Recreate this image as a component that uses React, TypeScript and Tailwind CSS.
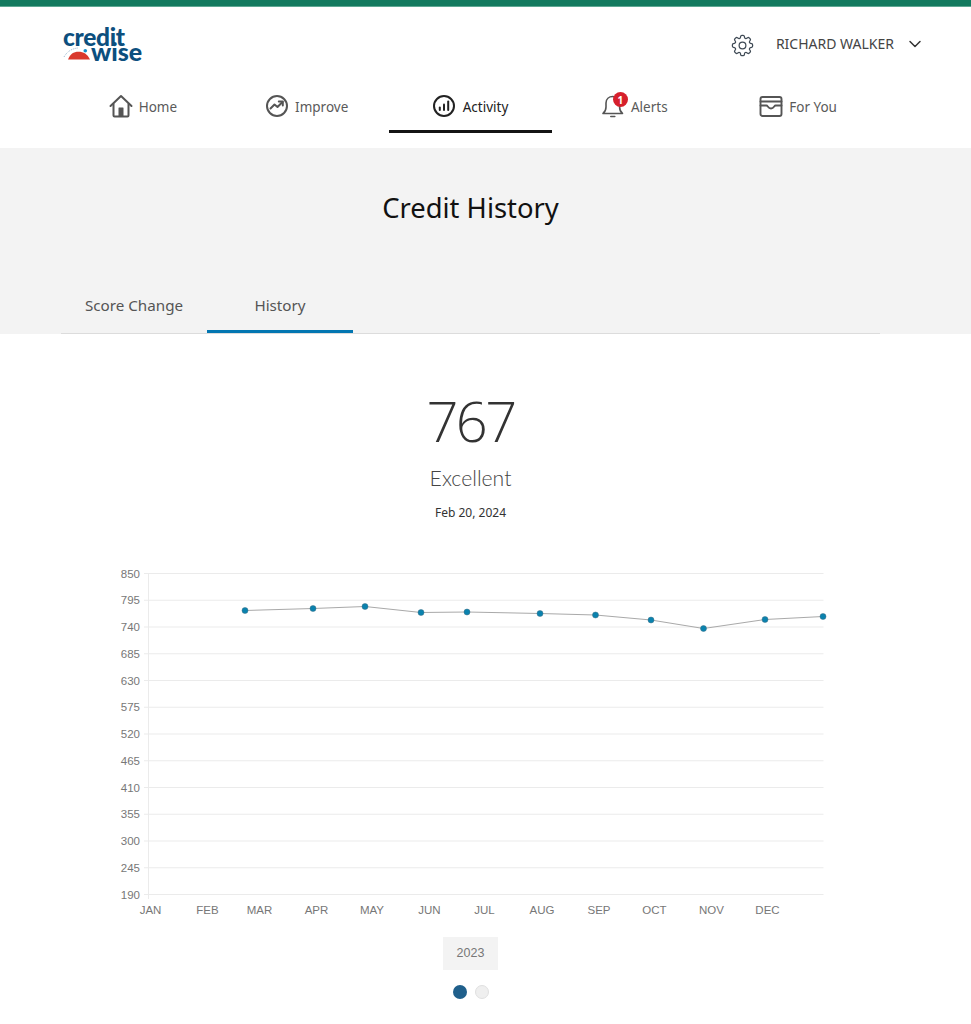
import React from "react";
import { ChevronDown } from "lucide-react";
import { HiOutlineCog8Tooth } from "react-icons/hi2";

const yLabels = [850, 795, 740, 685, 630, 575, 520, 465, 410, 355, 300, 245, 190];
const months: [string, number][] = [
  ["JAN", 150.5], ["FEB", 207.5], ["MAR", 259.5], ["APR", 316.5], ["MAY", 372], ["JUN", 429.5],
  ["JUL", 484.5], ["AUG", 542], ["SEP", 599], ["OCT", 654.5], ["NOV", 711.5], ["DEC", 767.5],
];
const pts: [number, number][] = [
  [245, 610.5], [313, 608.5], [365, 606.5], [421, 612.5], [467, 612], [540, 613.5],
  [595.5, 615], [651, 620], [703.5, 628.5], [765, 619.5], [823, 616.5],
];

function HomeIcon() {
  return (
    <svg width="24" height="24" viewBox="0 0 24 24" fill="none" stroke="#555" strokeWidth="2" strokeLinejoin="round" strokeLinecap="round">
      <path d="M1.5 12 L12 2 L22.5 12" />
      <path d="M4.5 10 V21.5 a1 1 0 0 0 1 1 H18.5 a1 1 0 0 0 1 -1 V10" />
      <rect x="9.5" y="13.5" width="5" height="9" fill="#555" stroke="none" rx="0.5" />
    </svg>
  );
}
function ImproveIcon() {
  return (
    <svg width="24" height="24" viewBox="0 0 24 24" fill="none" stroke="#555" strokeWidth="2" strokeLinejoin="round" strokeLinecap="round">
      <circle cx="12" cy="12" r="10" />
      <path d="M5.5 14.5 L9.5 10.5 L12.5 13 L17.5 8" />
      <path d="M13.8 7.6 H17.8 V11.6" />
    </svg>
  );
}
function ActivityIcon() {
  return (
    <svg width="24" height="24" viewBox="0 0 24 24" fill="none" stroke="#222" strokeWidth="2" strokeLinecap="round">
      <circle cx="11" cy="12" r="10" />
      <path d="M6.8 13.5 V16" />
      <path d="M11 10.5 V16" />
      <path d="M15.2 7.5 V16" />
    </svg>
  );
}
function BellIcon() {
  return (
    <svg width="24" height="24" viewBox="0 0 24 24" fill="none" stroke="#555" strokeWidth="1.6" strokeLinecap="round" strokeLinejoin="round">
      <path d="M2 19.5 H21.5 C19.5 18 18.6 16.5 18.6 13 V9 C18.6 5 15.5 2.5 11.8 2.5 C8 2.5 5 5 5 9 V13 C5 16.5 4 18 2 19.5 Z" />
      <path d="M9.8 22.5 H13.8" />
    </svg>
  );
}
function WalletIcon() {
  return (
    <svg width="24" height="24" viewBox="0 0 24 24" fill="none" stroke="#555" strokeWidth="1.9" strokeLinejoin="round" strokeLinecap="round">
      <rect x="1.5" y="3" width="21" height="19" rx="2" />
      <path d="M1.5 7.5 H22.5" />
      <path d="M1.5 11.5 H7.5 C8.8 11.5 9 14.5 12 14.5 C15 14.5 15.2 11.5 16.5 11.5 H22.5" />
    </svg>
  );
}

function NavItem({ label, icon, active }: { label: string; icon: React.ReactNode; active?: boolean }) {
  return (
    <div className={`relative flex h-[50px] items-start justify-center gap-[6px] pt-[9px] ${active ? "text-[#222]" : "text-[#5a5a5a]"}`}>
      {icon}
      <span className="text-[13.5px] leading-[26px]">{label}</span>
      {active && <div className="absolute bottom-[2px] left-0 right-0 h-[3px] bg-[#141414]" />}
    </div>
  );
}

export default function App() {
  return (
    <div className="min-h-[1024px] bg-white font-['Noto_Sans',sans-serif]">
      <div className="h-[7px] border-b border-[#5fa793] bg-[#147a5f]" />

      <header className="h-[141px] pr-[30px]">
        <div className="flex h-[78px] items-start justify-between pl-[63px] pr-[16px] pt-[21px]">
          <div className="relative h-[36px] w-[80px] font-['Lato',sans-serif] font-black text-[#0c4f7e]">
            <div className="absolute left-0 top-[2px] text-[24.5px] leading-[14px] tracking-[-0.3px]">credit</div>
            <div className="absolute left-[28px] top-[16px] text-[25px] leading-[14px] tracking-[0px]">wise</div>
            <svg className="absolute left-0 top-[14px]" width="32" height="20" viewBox="0 0 32 20">
              <path d="M5 17.5 C7 12 10.5 9.7 15.5 9.7 C20.5 9.7 24.5 12 27 17.5 Z" fill="#d9382c" />
              <path d="M1 15 C4 9.5 9 6.5 15 6" fill="none" stroke="#7fa6c4" strokeWidth="0.8" strokeDasharray="1 1" />
              <circle cx="22.3" cy="8.7" r="1.8" fill="#1591c9" />
            </svg>
          </div>
          <div className="mt-[4px] flex h-[24px] items-center text-[#444]">
            <HiOutlineCog8Tooth size={27} color="#3f4a55" strokeWidth={1.1} className="-mx-[2px] mt-[2px]" />
            <span className="ml-[22px] text-[14px] leading-[24px]">RICHARD WALKER</span>
            <ChevronDown size={20} strokeWidth={1.8} color="#333" className="ml-[11px]" />
          </div>
        </div>
        <nav className="grid grid-cols-5 pl-[61px] pr-[61px]">
          <NavItem label="Home" icon={<HomeIcon />} />
          <NavItem label="Improve" icon={<ImproveIcon />} />
          <NavItem label="Activity" icon={<ActivityIcon />} active />
          <div className="flex h-[50px] items-start justify-center gap-[6px] pt-[9px] text-[#5a5a5a]">
            <div className="relative">
              <BellIcon />
              <div className="absolute left-[12px] top-[-2px] flex h-[15px] w-[15px] items-center justify-center rounded-full bg-[#d6202c] text-[10px] font-bold leading-none text-white">
                1
              </div>
            </div>
            <span className="text-[13.5px] leading-[26px]">Alerts</span>
          </div>
          <NavItem label="For You" icon={<WalletIcon />} />
        </nav>
      </header>

      <section className="h-[186px] bg-[#f3f3f3] pr-[30px]">
        <h1 className="pt-[41px] text-center text-[27.4px] font-normal leading-[38px] text-[#111]">Credit History</h1>
        <div className="mx-[61px] mt-[60px] flex h-[47px] border-b border-[#dcdcdc] text-[15.2px] text-[#555]">
          <div className="flex w-[146px] justify-center pt-[7px] leading-[22px]">Score Change</div>
          <div className="flex h-[46px] w-[146px] justify-center border-b-[3px] border-[#0276b1] pt-[7px] leading-[22px]">History</div>
        </div>
      </section>

      <main className="pr-[30px]">
        <div className="flex flex-col items-center pt-[48px]">
          <div className="font-['Open_Sans',sans-serif] text-[56px] font-light leading-[76px] tracking-[-2.6px] text-[#333]">767</div>
          <div className="mt-[5px] font-['Lato',sans-serif] text-[21.2px] font-light leading-[30px] text-[#444]">Excellent</div>
          <div className="mt-[11px] text-[12px] leading-[18px] text-[#333]">Feb 20, 2024</div>
        </div>

        <svg className="mt-[36px] block" width="941" height="362" viewBox="0 558 941 362">
          {yLabels.map((v, i) => {
            const y = 573.5 + i * 26.75;
            return (
              <g key={v}>
                <line x1="144" x2="823.5" y1={y} y2={y} stroke="#ebebeb" strokeWidth="1" />
                <text x="140" y={y + 4} textAnchor="end" fontFamily="'Liberation Sans', sans-serif" fontSize="11.5" fill="#777">{v}</text>
              </g>
            );
          })}
          <line x1="148.5" x2="148.5" y1="573" y2="899" stroke="#ebebeb" strokeWidth="1" />
          {months.map(([m, x]) => (
            <text key={m} x={x} y="914" textAnchor="middle" fontFamily="'Liberation Sans', sans-serif" fontSize="11.5" fill="#777">{m}</text>
          ))}
          <polyline points={pts.map((p) => p.join(",")).join(" ")} fill="none" stroke="#a9a9a9" strokeWidth="1" />
          {pts.map(([x, y]) => (
            <circle key={x} cx={x} cy={y} r="3" fill="#0a82ae" stroke="#3c6f85" strokeWidth="0.5" />
          ))}
        </svg>

        <div className="mt-[17px] flex flex-col items-center">
          <div className="flex h-[33px] w-[55px] items-center justify-center bg-[#f3f3f3] font-['Liberation_Sans',sans-serif] text-[12.5px] text-[#777]">2023</div>
          <div className="mt-[15px] flex gap-[8px] pl-[1px]">
            <div className="h-[14px] w-[14px] rounded-full bg-[#1f5f8b]" />
            <div className="h-[14px] w-[14px] rounded-full border border-[#e0e0e0] bg-[#efefef]" />
          </div>
        </div>
      </main>
    </div>
  );
}
